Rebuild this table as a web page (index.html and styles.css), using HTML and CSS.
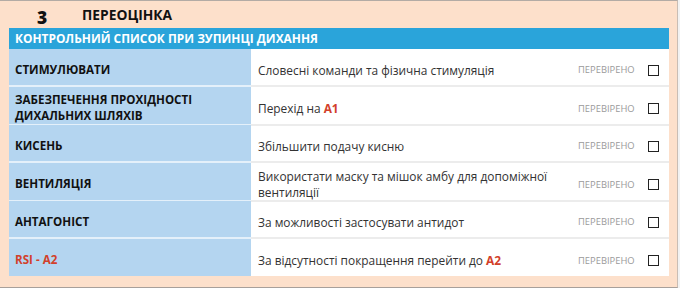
FILE: index.html
```html
<!DOCTYPE html>
<html lang="uk">
<head>
<meta charset="utf-8">
<link rel="stylesheet" href="styles.css">
</head>
<body>
<div class="panel">
  <div class="title">
    <span class="num">3</span>
    <span class="title-text">ПЕРЕОЦІНКА</span>
  </div>
  <div class="table">
    <div class="head">КОНТРОЛЬНИЙ СПИСОК ПРИ ЗУПИНЦІ ДИХАННЯ</div>
    <div class="row">
      <div class="label"><span>СТИМУЛЮВАТИ</span></div>
      <div class="desc"><span>Словесні команди та фізична стимуляція</span></div>
      <div class="checked"><span>ПЕРЕВІРЕНО</span></div>
      <div class="box"><span class="cb"></span></div>
    </div>
    <div class="row">
      <div class="label"><span>ЗАБЕЗПЕЧЕННЯ ПРОХІДНОСТІ<br>ДИХАЛЬНИХ ШЛЯХІВ</span></div>
      <div class="desc"><span>Перехід на <b class="red">A1</b></span></div>
      <div class="checked"><span>ПЕРЕВІРЕНО</span></div>
      <div class="box"><span class="cb"></span></div>
    </div>
    <div class="row">
      <div class="label"><span>КИСЕНЬ</span></div>
      <div class="desc"><span>Збільшити подачу кисню</span></div>
      <div class="checked"><span>ПЕРЕВІРЕНО</span></div>
      <div class="box"><span class="cb"></span></div>
    </div>
    <div class="row">
      <div class="label"><span>ВЕНТИЛЯЦІЯ</span></div>
      <div class="desc"><span>Використати маску та мішок амбу для допоміжної вентиляції</span></div>
      <div class="checked"><span>ПЕРЕВІРЕНО</span></div>
      <div class="box"><span class="cb"></span></div>
    </div>
    <div class="row">
      <div class="label"><span>АНТАГОНІСТ</span></div>
      <div class="desc"><span>За можливості застосувати антидот</span></div>
      <div class="checked"><span>ПЕРЕВІРЕНО</span></div>
      <div class="box"><span class="cb"></span></div>
    </div>
    <div class="row last">
      <div class="label red"><span>RSI - A2</span></div>
      <div class="desc"><span>За відсутності покращення перейти до <b class="red">A2</b></span></div>
      <div class="checked"><span>ПЕРЕВІРЕНО</span></div>
      <div class="box"><span class="cb"></span></div>
    </div>
  </div>
</div>
</body>
</html>
```
FILE: styles.css
```css
html, body {
  margin: 0;
  padding: 0;
  background: #f2f2f2;
}
body {
  font-family: "Open Sans", "Liberation Sans", sans-serif;
}
.panel {
  box-sizing: border-box;
  width: 678px;
  height: 288px;
  background: #fde0cb;
  border-top: 1px solid #b3aba5;
  border-right: 1px solid #c9bdb4;
  border-bottom: 1px solid #a8a09b;
  padding: 0 8px 0 9px;
}
.title {
  height: 27px;
  display: flex;
  align-items: flex-start;
}
.num {
  font-weight: 800;
  font-size: 17.5px;
  line-height: 20px;
  margin-top: 6px;
  margin-left: 28px;
  width: 45px;
  color: #111;
}
.title-text {
  font-weight: 700;
  font-size: 13.8px;
  line-height: 16px;
  margin-top: 6px;
  color: #111;
}
.table {
  width: 660px;
}
.head {
  background: #2aa4da;
  color: #fff;
  font-weight: 700;
  font-size: 11.9px;
  height: 21px;
  line-height: 21px;
  padding-left: 6px;
}
.row {
  display: grid;
  grid-template-columns: 242px 1fr 70px 21px;
  height: 38px;
  background: #fff;
}
.row > div {
  display: flex;
  align-items: center;
  padding-top: 5px;
  border-bottom: 2px solid #ececec;
}
.row > .label {
  background: #b4d5f0;
  border-bottom-color: #e4f0fa;
  font-weight: 700;
  font-size: 11.6px;
  line-height: 16px;
  color: #111;
  padding-left: 6px;
}
.row.last > div {
  border-bottom: 0;
}
.row.last {
  height: 37px;
}
.desc {
  font-size: 11.9px;
  line-height: 16px;
  color: #333;
  padding-left: 7px;
  padding-right: 4px;
}
.checked {
  font-size: 9.4px;
  color: #9a9a9a;
}
.cb {
  box-sizing: border-box;
  width: 11px;
  height: 11px;
  margin-top: 1px;
  border: 1.5px solid #222;
}
.red {
  color: #d2402a;
}
b.red {
  font-weight: 700;
}
.label.red {
  color: #d2402a;
}
```
